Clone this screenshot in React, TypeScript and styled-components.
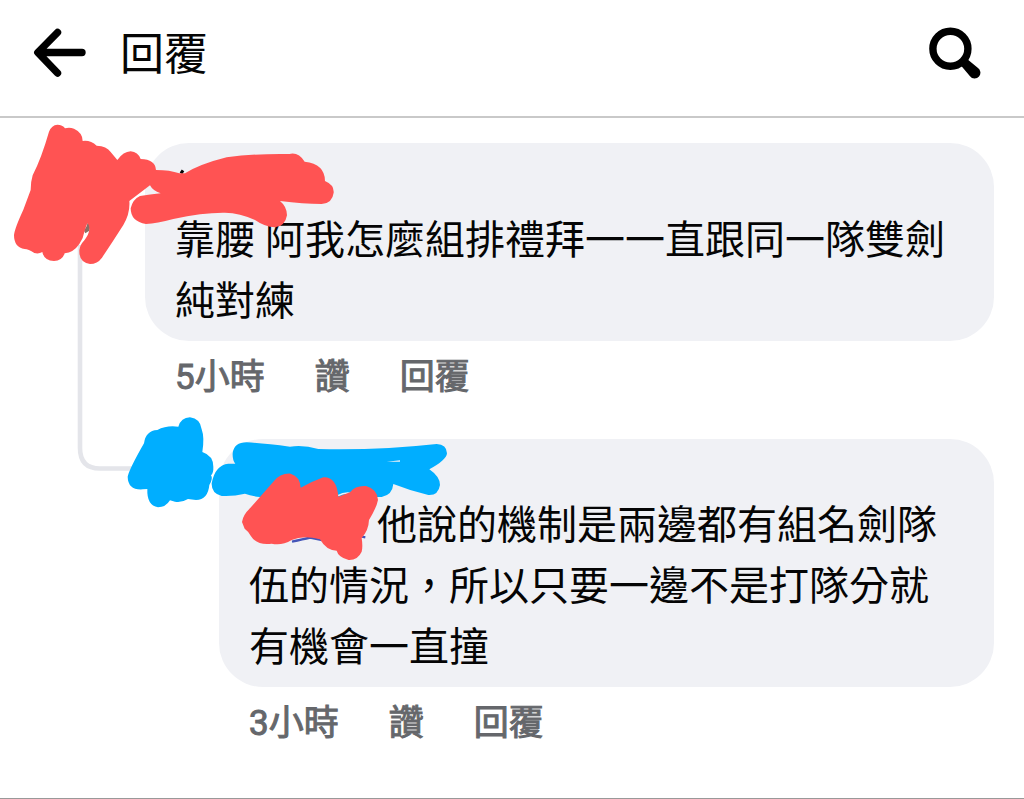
import React from "react";
import styled, { createGlobalStyle } from "styled-components";

const GlobalStyle = createGlobalStyle`
  * { box-sizing: border-box; }
  body {
    margin: 0;
    background: #fff;
    color: #050505;
    font-family: Roboto, "Noto Sans CJK TC", sans-serif;
  }
`;

const Page = styled.div`
  min-height: 100vh;
  border-bottom: 1px solid #999;
`;

const Header = styled.header`
  display: flex;
  align-items: center;
  height: 118px;
  padding: 0 40px 10px 30px;
  border-bottom: 2px solid #c9c9c9;
`;

const IconButton = styled.button`
  display: block;
  padding: 0;
  border: 0;
  background: none;
  color: #000;
  cursor: pointer;

  svg { display: block; }
`;

const Title = styled.h1`
  flex: 1;
  margin: 0 0 0 30px;
  padding-top: 4px;
  font-size: 44px;
  line-height: 56px;
  font-weight: 400;
`;

const Thread = styled.main`
  position: relative;
  padding: 25px 30px 0 145px;
`;

const Comment = styled.article<{ $nested?: boolean }>`
  margin-left: ${(p) => (p.$nested ? 74 : 0)}px;
`;

const Bubble = styled.div`
  padding: 0 30px 9px;
  border-radius: 44px;
  background: #f0f1f5;
`;

const NameLine = styled.div<{ $tall?: boolean }>`
  height: ${(p) => (p.$tall ? 67 : 56)}px;
`;

const Message = styled.p`
  margin: 0;
  font-size: 40px;
  line-height: 61px;
  font-weight: 400;
`;

const Mention = styled.span`
  display: inline-block;
  width: 128px;
`;

const Actions = styled.footer`
  display: flex;
  gap: 50px;
  padding: 12px 30px 36px;
  color: #65676b;
  font-size: 35px;
  line-height: 50px;
  font-weight: 400;
  -webkit-text-stroke: 1px currentColor;
`;

const ActionButton = styled.button`
  padding: 0;
  border: 0;
  background: none;
  color: inherit;
  font: inherit;
  cursor: pointer;
`;

const Marks = styled.svg`
  position: absolute;
  top: 0;
  left: 0;
  pointer-events: none;
`;

const RED = "#ff5353";
const BLUE = "#00aeff";

const BackIcon = () => (
  <svg width="60" height="56" viewBox="0 0 60 56" fill="none" stroke="currentColor" strokeWidth="7.4" strokeLinecap="round" strokeLinejoin="round" aria-hidden="true">
    <path d="M27.5 7.5 7.8 27.5 27.5 48M8.5 27.5H52" />
  </svg>
);

const SearchIcon = () => (
  <svg width="56" height="56" viewBox="0 0 56 56" aria-hidden="true">
    <circle cx="22.4" cy="23.7" r="17.5" fill="none" stroke="currentColor" strokeWidth="7.4" />
    <path d="M31 39 38 32 40.6 35.2 49.4 42.6A5.8 5.8 0 1 1 42 51.2L34.2 42Z" fill="currentColor" />
  </svg>
);

/* Connector line and the pen strokes that hide avatars and names. */
const ThreadMarks = () => (
  <Marks width="460" height="460" viewBox="0 118 460 460" aria-hidden="true">
    <path d="M80 245V448Q80 468.5 100 468.5H145" fill="none" stroke="#e4e5ea" strokeWidth="4.6" />
    <g transform="translate(0 110) scale(.33333)">
      <path d="M252 362Q262 350 264 334Q274 350 268 362L256 370Z" fill="#8b6f66" />
      <path d="M543 190 549 181" stroke="#050505" strokeWidth="9" />
      <path
        fill={RED}
        d="M147 65Q155 45 172 44Q188 44 195 55Q208 51 222 56Q248 68 248 93Q272 90 290 107Q320 108 332 126L352 150Q370 125 392 124Q414 126 422 147Q466 148 468 180Q510 180 538 190H555Q600 162 680 142Q770 130 868 132Q895 125 914 155Q975 162 975 213Q1003 225 1001 248Q997 280 965 282Q910 282 840 273Q861 290 861 316Q855 350 825 352Q795 351 765 330Q720 309 675 308Q610 307 520 327Q470 340 438 342Q392 335 392 295Q398 268 420 258Q450 253 482 250Q458 242 450 226L388 273Q391 310 370 345Q337 397 306 443Q292 462 270 462Q236 457 238 420Q240 404 252 392Q267 374 268 358Q268 344 262 340Q254 359 248 384L238 402Q220 428 194 430Q187 452 162 453Q132 452 127 426Q116 433 103 429Q85 417 74 417Q42 412 42 375Q44 355 70 299L92 240Q92 215 98 196Q125 142 147 65Z"
      />
    </g>
    <g transform="translate(60 400) scale(.33333)">
      <path fill={BLUE} d="M355 80Q363 53 390 52Q421 56 425 88Q434 112 427 156Q460 167 460 200Q461 218 453 226Q460 236 448 255Q444 299 408 300L384 297Q367 308 345 305L330 301Q317 322 294 322Q260 316 262 267L248 268Q204 271 203 230Q208 207 252 130Q257 92 292 90Q320 75 355 80Z" />
      <path fill={BLUE} fillRule="evenodd" d="M518 160Q522 127 560 127Q610 130 690 140Q730 134 775 147Q960 151 1130 132Q1160 133 1161 160Q1160 180 1108 208Q1140 230 1140 255Q1135 287 1105 285Q1050 272 1000 252Q997 285 965 291H600Q572 288 555 281Q520 290 485 288Q454 280 455 250Q465 195 505 191H526Q517 180 518 160ZM980 185 1020 181V185Z" />
      <path d="M696 425Q730 418 750 413L790 421M906 410 916 412" fill="none" stroke="#4455b8" strokeWidth="7" />
      <path d="M834 287Q853 276 874 280" fill="none" stroke="#f0f1f5" strokeWidth="4" />
      <path fill={RED} d="M546 366Q549 345 570 325L640 245Q661 219 692 221Q720 229 722 263Q757 244 790 232Q830 230 835 290L870 277Q886 256 918 258Q953 268 954 300Q950 322 927 360Q926 391 905 414Q909 440 905 455Q893 481 866 480Q835 472 830 452Q799 452 780 418Q730 405 695 420Q665 438 635 431Q590 437 572 407Q564 393 554 386Z" />
    </g>
  </Marks>
);

type CommentActionsProps = { time: string };

const CommentActions = ({ time }: CommentActionsProps) => (
  <Actions>
    <time>{time}</time>
    <ActionButton type="button">讚</ActionButton>
    <ActionButton type="button">回覆</ActionButton>
  </Actions>
);

export default function App() {
  return (
    <Page lang="zh-TW">
      <GlobalStyle />
      <Header>
        <IconButton type="button" aria-label="返回"><BackIcon /></IconButton>
        <Title>回覆</Title>
        <IconButton type="button" aria-label="搜尋"><SearchIcon /></IconButton>
      </Header>
      <Thread>
        <Comment>
          <Bubble>
            <NameLine $tall />
            <Message>靠腰 阿我怎麼組排禮拜一一直跟同一隊雙劍純對練</Message>
          </Bubble>
          <CommentActions time="5小時" />
        </Comment>
        <Comment $nested>
          <Bubble>
            <NameLine />
            <Message><Mention />他說的機制是兩邊都有組名劍隊伍的情況，所以只要一邊不是打隊分就有機會一直撞</Message>
          </Bubble>
          <CommentActions time="3小時" />
        </Comment>
        <ThreadMarks />
      </Thread>
    </Page>
  );
}
